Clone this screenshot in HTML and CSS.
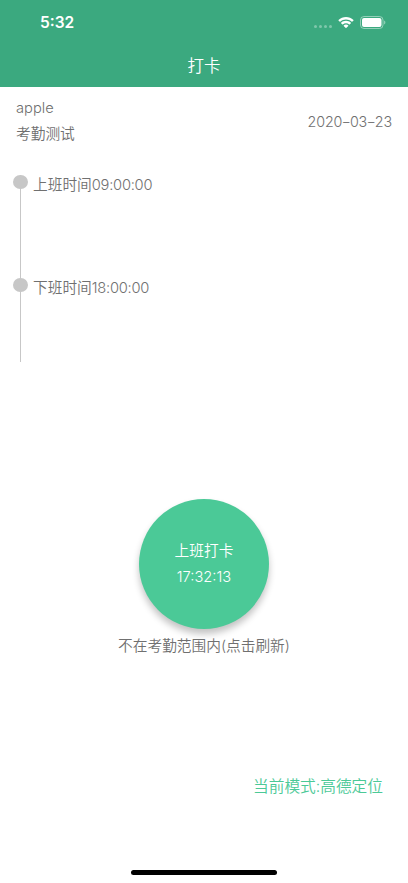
FILE: index.html
```html
<!DOCTYPE html>
<html lang="zh-CN">
<head>
<meta charset="utf-8">
<meta name="viewport" content="width=device-width, initial-scale=1">
<title>打卡</title>
<link rel="stylesheet" href="styles.css">
</head>
<body>
<div class="screen">
  <header class="header">
    <div class="status">
      <span class="clock">5:32</span>
      <div class="indicators">
        <span class="signal"><i></i><i></i><i></i><i></i></span>
        <svg class="wifi" width="16" height="12" viewBox="0 0 16 12" fill="#fff">
          <path d="M8 2.4c2.2 0 4.2.9 5.8 2.3.1.1.3.1.4 0l1.3-1.2c.2-.2.2-.4 0-.5C13.5 1.1 10.8 0 8 0S2.5 1.1.5 3c-.2.1-.2.3 0 .5l1.3 1.2c.1.1.3.1.4 0C3.8 3.3 5.8 2.4 8 2.4z"/>
          <path d="M8 6.3c1.2 0 2.3.4 3.2 1.2.1.1.3.1.4 0l1.3-1.3c.1-.1.1-.3 0-.5C11.6 4.5 9.9 3.8 8 3.8s-3.6.7-4.9 1.9c-.1.2-.1.4 0 .5l1.3 1.3c.1.1.3.1.4 0 .9-.8 2-1.2 3.2-1.2z"/>
          <path d="M10.3 8.9c.1-.1.1-.3 0-.4C9.7 8 8.9 7.6 8 7.6S6.300 8 5.700 8.500c-.1.100-.1.300 0 .4l2.100 2.200c.1.100.3.100.4 0z"/>
        </svg>
        <svg class="battery" width="26" height="13" viewBox="0 0 26 13">
          <rect x=".5" y=".5" width="22.5" height="12" rx="3.5" fill="none" stroke="#fff" stroke-opacity=".45"/>
          <rect x="2" y="2" width="19.5" height="9" rx="2" fill="#fff"/>
          <path d="M24.2 4.5c1.6.7 1.6 3.3 0 4z" fill="#fff" fill-opacity=".5"/>
        </svg>
      </div>
    </div>
    <h1 class="title">打卡</h1>
  </header>
  <section class="profile">
    <div class="who">
      <span class="name">apple</span>
      <span>考勤测试</span>
    </div>
    <span class="date">2020<span class="dash">-</span>03<span class="dash">-</span>23</span>
  </section>
  <ol class="timeline">
    <li class="shift"><span class="rail"></span><span class="label">上班时间<span class="time">09:00:00</span></span></li>
    <li class="shift"><span class="rail"></span><span class="label">下班时间<span class="time">18:00:00</span></span></li>
  </ol>
  <main class="punch">
    <button class="punch-button"><span>上班打卡</span><span>17:32:13</span></button>
    <p class="hint">不在考勤范围内(点击刷新)</p>
  </main>
  <p class="mode">当前模式:高德定位</p>
  <div class="home"></div>
</div>
</body>
</html>
```
FILE: styles.css
```css
* { box-sizing: border-box; margin: 0; padding: 0; }
body {
  background: #fff;
  color: #707070;
  font: 350 14.7px/20px Inter, "Noto Sans CJK SC", sans-serif;
}
.screen { height: 883px; display: flex; flex-direction: column; overflow: hidden; }
.header { height: 87px; background: #3ba97f; color: #fff; flex: none; }
.status { height: 44px; padding: 1px 22px 0 40px; display: flex; align-items: center; justify-content: space-between; }
.clock { padding-top: 1px; font-size: 15.5px; font-weight: 600; }
.indicators { display: flex; align-items: center; }
.signal { display: flex; gap: 2px; margin: 8px 6px 0 0; }
.signal i { width: 3px; height: 3px; border-radius: 50%; background: #fff; opacity: .35; }
.battery { margin-left: 6px; }
.title { font-size: 16.5px; line-height: 44px; font-weight: 350; text-align: center; }
.profile { height: 67px; padding: 11px 16px 0; display: flex; justify-content: space-between; flex: none; }
.who { display: flex; flex-direction: column; gap: 6px; }
.date { padding-top: 14px; font-size: 14.3px; letter-spacing: -.1px; }
.dash { display: inline-block; transform: scaleX(1.45); margin: 0 .6px; }
.timeline { list-style: none; padding: 21px 0 0 13px; flex: none; }
.shift { display: flex; gap: 5px; height: 102.5px; }
.shift:last-child { height: 84px; }
.time { letter-spacing: -.25px; }
.rail { width: 15px; display: flex; flex-direction: column; align-items: center; }
.rail::before { content: ""; width: 14.5px; height: 14px; border-radius: 50%; background: #c7c7c7; flex: none; }
.rail::after { content: ""; width: 1px; flex: 1; background: #c7c7c7; }
.punch { margin-top: 137px; display: flex; flex-direction: column; align-items: center; }
.punch-button {
  width: 130px; height: 130px; border: 0; border-radius: 50%;
  background: #4bc997; color: #fff; font: inherit;
  display: flex; flex-direction: column; align-items: center; justify-content: center; gap: 6px;
  box-shadow: 0 5px 7px rgba(0, 0, 0, .24);
}
.hint { margin-top: 7px; }
.mode { margin: 121px 25px 0 0; text-align: right; color: #4bc997; font-size: 15.7px; }
.home { width: 146px; height: 5px; border-radius: 3px; background: #000; margin: auto auto 8px; flex: none; }
```
